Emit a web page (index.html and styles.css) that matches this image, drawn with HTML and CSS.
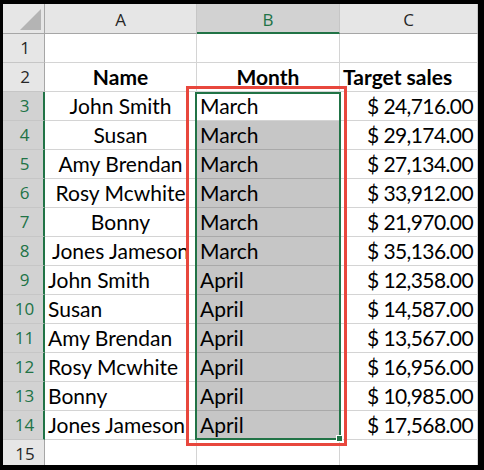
FILE: index.html
```html
<!DOCTYPE html>
<html>
<head>
<meta charset="utf-8">
<link rel="stylesheet" href="styles.css">
</head>
<body>
<div class="frame">
  <div class="sheet">
    <div class="hd corner"><span class="tri"></span></div>
    <div class="hd col">A</div>
    <div class="hd col sel">B</div>
    <div class="hd col">C</div>

    <div class="hd row">1</div><div class="c"></div><div class="c"></div><div class="c"></div>
    <div class="hd row">2</div><div class="c b ctr">Name</div><div class="c b ctr">Month</div><div class="c b">Target sales</div>

    <div class="hd row sel">3</div><div class="c ctr">John Smith</div><div class="c">March</div><div class="c r">$ 24,716.00</div>
    <div class="hd row sel">4</div><div class="c ctr">Susan</div><div class="c g">March</div><div class="c r">$ 29,174.00</div>
    <div class="hd row sel">5</div><div class="c ctr">Amy Brendan</div><div class="c g">March</div><div class="c r">$ 27,134.00</div>
    <div class="hd row sel">6</div><div class="c ctr">Rosy Mcwhite</div><div class="c g">March</div><div class="c r">$ 33,912.00</div>
    <div class="hd row sel">7</div><div class="c ctr">Bonny</div><div class="c g">March</div><div class="c r">$ 21,970.00</div>
    <div class="hd row sel">8</div><div class="c ctr">Jones Jameson</div><div class="c g">March</div><div class="c r">$ 35,136.00</div>
    <div class="hd row sel">9</div><div class="c">John Smith</div><div class="c g">April</div><div class="c r">$ 12,358.00</div>
    <div class="hd row sel">10</div><div class="c">Susan</div><div class="c g">April</div><div class="c r">$ 14,587.00</div>
    <div class="hd row sel">11</div><div class="c">Amy Brendan</div><div class="c g">April</div><div class="c r">$ 13,567.00</div>
    <div class="hd row sel">12</div><div class="c">Rosy Mcwhite</div><div class="c g">April</div><div class="c r">$ 16,956.00</div>
    <div class="hd row sel">13</div><div class="c">Bonny</div><div class="c g">April</div><div class="c r">$ 10,985.00</div>
    <div class="hd row sel">14</div><div class="c">Jones Jameson</div><div class="c g">April</div><div class="c r">$ 17,568.00</div>
    <div class="hd row last">15</div><div class="c last"></div><div class="c last"></div><div class="c last"></div>

    <div class="selection"></div>
    <div class="handle"></div>
    <div class="redbox"></div>
  </div>
</div>
</body>
</html>
```

FILE: styles.css
```css
html, body {
  margin: 0;
  padding: 0;
  background: #000;
}
.frame {
  width: 484px;
  height: 470px;
  box-sizing: border-box;
  padding: 4px 6px 5px 3px;
  background: #000;
}
.sheet {
  position: relative;
  width: 475px;
  height: 461px;
  overflow: hidden;
  background: #fff;
  display: grid;
  grid-template-columns: 42px 152px 143px 138px;
  grid-template-rows: 30px repeat(14, 29px) 25px;
}
.sheet > div {
  box-sizing: border-box;
}
.hd {
  background: #e6e6e6;
  font-family: "Open Sans", "Noto Sans", sans-serif;
  font-size: 17px;
  color: #262626;
  text-align: center;
  white-space: nowrap;
}
.col {
  line-height: 27px;
  padding-top: 2px;
  border-right: 1px solid #c6c6c6;
  border-bottom: 1px solid #a6a6a6;
}
.col.sel {
  background: #d2d2d2;
  color: #217346;
  border-bottom: 2px solid #217346;
}
.corner {
  position: relative;
  border-right: 1px solid #a6a6a6;
  border-bottom: 1px solid #a6a6a6;
}
.tri {
  position: absolute;
  left: 17px;
  top: 5px;
  width: 21px;
  height: 21px;
  background: #b4b4b4;
  clip-path: polygon(100% 0, 100% 100%, 0 100%);
}
.row {
  line-height: 28px;
  padding-left: 3px;
  border-right: 1px solid #a6a6a6;
  border-bottom: 1px solid #c6c6c6;
}
.row.sel {
  background: #d2d2d2;
  color: #217346;
  border-right: 2px solid #217346;
}
.row.last {
  border-bottom: none;
}
.c {
  font-family: Lato, "Liberation Sans", sans-serif;
  font-size: 21px;
  line-height: 28px;
  color: #000;
  padding: 0 3px;
  white-space: nowrap;
  overflow: hidden;
  border-right: 1px solid #d4d4d4;
  border-bottom: 1px solid #d4d4d4;
}
.c.last {
  border-bottom: none;
}
.c.b {
  font-weight: bold;
}
.c.ctr {
  text-align: center;
}
.c.r {
  text-align: right;
  letter-spacing: -0.6px;
  padding-right: 4px;
}
.c.g {
  background: #c6c6c6;
  border-bottom-color: #a9a9a9;
}
.selection {
  position: absolute;
  left: 192px;
  top: 88px;
  width: 146px;
  height: 348px;
  border: 2px solid #217346;
  box-sizing: border-box;
}
.handle {
  position: absolute;
  left: 333px;
  top: 431px;
  width: 7px;
  height: 7px;
  box-sizing: border-box;
  background: #217346;
  border: 1px solid #fff;
}
.redbox {
  position: absolute;
  left: 183px;
  top: 82px;
  width: 161px;
  height: 360px;
  border: 3px solid #e8473d;
  box-sizing: border-box;
}
```
